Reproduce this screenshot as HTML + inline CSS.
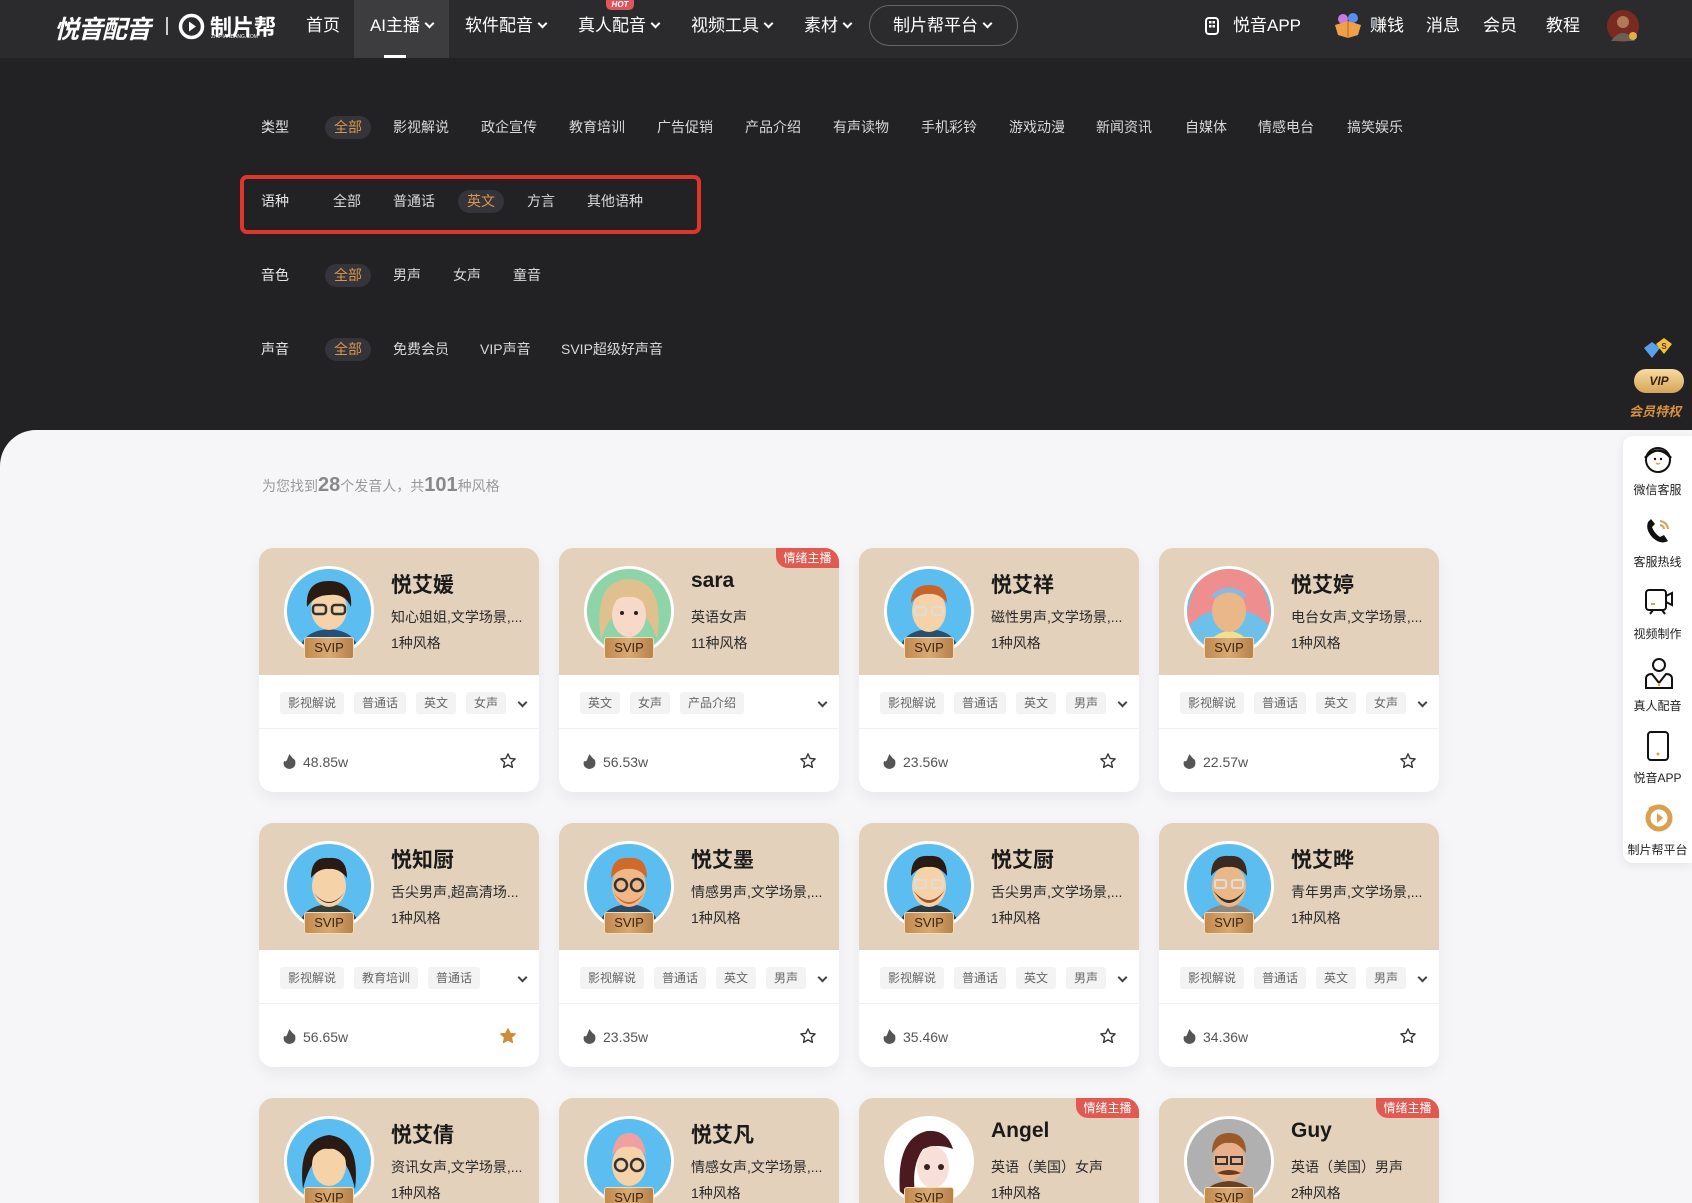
<!DOCTYPE html>
<html style="overflow:hidden;height:1203px"><head><meta charset="utf-8">
<style>
*{margin:0;padding:0;box-sizing:border-box}
body{width:1692px;height:1203px;overflow:hidden;background:#222224;font-family:"Liberation Sans","Noto Sans CJK SC",sans-serif;position:relative}
.a{position:absolute;white-space:nowrap}
.nav{position:absolute;left:0;top:0;width:1692px;height:58px;background:#2b2b2d}
.ni{position:absolute;top:0;height:58px;line-height:52px;color:#fff;font-size:17px}
.ch{display:inline-block;width:7px;height:7px;border-right:2px solid #fff;border-bottom:2px solid #fff;transform:rotate(45deg);margin-left:6px;position:relative;top:-4px}
.f{position:absolute;font-size:14px;color:#d8d8d8;line-height:23px;height:23px}
.lab{color:#e6e6e6}
.on{color:#d8964f;background:#34343a;border-radius:12px;padding:0 9px;margin-left:-9px}
.white{position:absolute;left:0;top:430px;width:1692px;height:773px;background:#f6f6f8;border-top-left-radius:36px}
.card{position:absolute;width:280px;height:244px;background:#fff;border-radius:14px;box-shadow:0 6px 16px rgba(0,0,0,.06);overflow:hidden}
.r3{height:105px;border-radius:14px 14px 0 0}
.top{position:absolute;left:0;top:0;width:280px;height:127px;background:#e4d1bc}
.av{position:absolute;left:25px;top:18px;width:90px;height:90px;border-radius:50%;border:3px solid #fff;overflow:hidden}
.sv{position:absolute;left:45px;top:89px;width:50px;height:22px;border-radius:3px;background:linear-gradient(90deg,#c28a4f,#d9aa73,#b7814a);border:1px solid #f3dcb8;color:#3b2410;font-size:13px;text-align:center;line-height:20px}
.nm{position:absolute;left:132px;top:21px;font-size:21px;font-weight:bold;color:#1a1a1a}
.ds{position:absolute;left:132px;top:59px;font-size:14px;color:#2a2a2a}
.st{position:absolute;left:132px;top:85px;font-size:14px;color:#2a2a2a}
.tags{position:absolute;left:21px;top:144px;height:22px}
.tg{display:inline-block;height:22px;line-height:22px;padding:0 8px;margin-right:10px;background:#f3f3f3;color:#666;font-size:12px;border-radius:3px}
.dd{position:absolute;left:260px;top:151px;width:7px;height:7px;border-right:2px solid #444;border-bottom:2px solid #444;transform:rotate(45deg)}
.ln{position:absolute;left:0;top:180px;width:280px;height:1px;background:#f0f0f0}
.hot{position:absolute;left:24px;top:206px;font-size:14px;color:#555}
.hot svg{vertical-align:-2px;margin-right:7px}
.star{position:absolute;left:240px;top:204px}
.emo{position:absolute;right:0;top:0;width:63px;height:20px;background:#e05a52;color:#fff;font-size:12px;line-height:20px;text-align:center;border-bottom-left-radius:12px}
.side{position:absolute;left:1623px;top:436px;width:69px;height:427px;background:#fff;border-radius:10px 0 0 10px;box-shadow:0 2px 10px rgba(0,0,0,.08)}
.si{position:absolute;left:1623px;width:69px;text-align:center;font-size:12px;color:#222}
</style></head><body>
<div class="nav"></div>
<div class="a" style="left:54px;top:10px;font-size:25px;font-weight:bold;font-style:italic;color:#fff;letter-spacing:-1px">悦音配音</div>
<div class="a" style="left:166px;top:17px;width:2px;height:18px;background:#ccc"></div>
<svg class="a" style="left:178px;top:13px" width="27" height="27" viewBox="0 0 27 27"><circle cx="13.5" cy="13.5" r="11" fill="none" stroke="#fff" stroke-width="3.5"/><path d="M11 8.5 L18 13.5 L11 18.5Z" fill="#fff"/></svg>
<div class="a" style="left:210px;top:10px;font-size:22px;font-weight:bold;color:#fff">制片帮</div>
<div class="a" style="left:211px;top:34px;font-size:5px;color:#fff">ZHIPIANBANG.COM</div>
<div class="ni" style="left:306px">首页</div>
<div class="ni" style="left:354px;width:95px;background:#3d3d40;text-align:center">AI主播<span class="ch"></span></div>
<div class="a" style="left:384px;top:55px;width:22px;height:3px;background:#fff"></div>
<div class="ni" style="left:465px">软件配音<span class="ch"></span></div>
<div class="ni" style="left:578px">真人配音<span class="ch"></span></div>
<div class="a" style="left:606px;top:0;width:28px;height:10px;background:#e0545c;border-radius:0 0 5px 5px;color:#fff;font-size:8px;font-weight:bold;font-style:italic;text-align:center;line-height:10px">HOT</div>
<div class="ni" style="left:691px">视频工具<span class="ch"></span></div>
<div class="ni" style="left:804px">素材<span class="ch"></span></div>
<div class="a" style="left:869px;top:5px;width:149px;height:41px;border:1px solid #666;border-radius:21px;color:#fff;font-size:17px;line-height:39px;padding-left:23px">制片帮平台<span class="ch"></span></div>
<svg class="a" style="left:1205px;top:17px" width="14" height="18" viewBox="0 0 14 18"><rect x="1" y="1" width="12" height="16" rx="3" fill="none" stroke="#fff" stroke-width="2"/><rect x="4" y="4" width="2.5" height="2.5" fill="#fff"/><rect x="7.5" y="4" width="2.5" height="2.5" fill="#fff"/><rect x="4" y="8" width="2.5" height="2.5" fill="#fff"/><rect x="7.5" y="8" width="2.5" height="2.5" fill="#fff"/></svg>
<div class="ni" style="left:1233px">悦音APP</div>
<svg class="a" style="left:1333px;top:11px" width="30" height="28" viewBox="0 0 30 28"><circle cx="10" cy="8" r="5" fill="#c77be0"/><circle cx="20" cy="7" r="5" fill="#5a8ef0"/><path d="M2 14 L15 10 L28 14 L25 24 L15 27 L5 24Z" fill="#f0a04a"/><path d="M15 10 L15 27" stroke="#d0782a" stroke-width="1.5"/></svg>
<div class="ni" style="left:1370px">赚钱</div>
<div class="ni" style="left:1426px">消息</div>
<div class="ni" style="left:1483px">会员</div>
<div class="ni" style="left:1546px">教程</div>
<svg class="a" style="left:1606px;top:9px" width="34" height="34" viewBox="0 0 34 34"><circle cx="17" cy="17" r="16" fill="#7a2a20"/><circle cx="17" cy="13" r="6" fill="#b07a5a"/><path d="M5 32 Q17 16 29 32Z" fill="#6b6055"/><circle cx="27" cy="27" r="4" fill="#e0b040"/></svg>

<div class="f lab" style="left:261px;top:116px">类型</div>
<div class="f on" style="left:334px;top:116px">全部</div>
<div class="f" style="left:393px;top:116px">影视解说</div>
<div class="f" style="left:481px;top:116px">政企宣传</div>
<div class="f" style="left:569px;top:116px">教育培训</div>
<div class="f" style="left:657px;top:116px">广告促销</div>
<div class="f" style="left:745px;top:116px">产品介绍</div>
<div class="f" style="left:833px;top:116px">有声读物</div>
<div class="f" style="left:921px;top:116px">手机彩铃</div>
<div class="f" style="left:1009px;top:116px">游戏动漫</div>
<div class="f" style="left:1096px;top:116px">新闻资讯</div>
<div class="f" style="left:1185px;top:116px">自媒体</div>
<div class="f" style="left:1258px;top:116px">情感电台</div>
<div class="f" style="left:1347px;top:116px">搞笑娱乐</div>

<div class="a" style="left:240px;top:175px;width:461px;height:59px;border:4px solid #e0362a;border-radius:7px"></div>
<div class="f lab" style="left:261px;top:190px">语种</div>
<div class="f" style="left:333px;top:190px">全部</div>
<div class="f" style="left:393px;top:190px">普通话</div>
<div class="f on" style="left:467px;top:190px">英文</div>
<div class="f" style="left:527px;top:190px">方言</div>
<div class="f" style="left:587px;top:190px">其他语种</div>

<div class="f lab" style="left:261px;top:264px">音色</div>
<div class="f on" style="left:334px;top:264px">全部</div>
<div class="f" style="left:393px;top:264px">男声</div>
<div class="f" style="left:453px;top:264px">女声</div>
<div class="f" style="left:513px;top:264px">童音</div>

<div class="f lab" style="left:261px;top:338px">声音</div>
<div class="f on" style="left:334px;top:338px">全部</div>
<div class="f" style="left:393px;top:338px">免费会员</div>
<div class="f" style="left:480px;top:338px">VIP声音</div>
<div class="f" style="left:561px;top:338px">SVIP超级好声音</div>

<div class="white"></div>
<div class="a" style="left:262px;top:474px;font-size:14px;color:#999">为您找到<b style="font-size:20px;color:#888">28</b>个发音人，共<b style="font-size:20px;color:#888">101</b>种风格</div>

<!-- sidebar -->
<svg class="a" style="left:1640px;top:338px" width="40" height="26" viewBox="0 0 40 26"><path d="M4 10 L12 4 L20 10 L12 20Z" fill="#5aa0e8"/><path d="M16 6 L24 0 L32 6 L24 16Z" fill="#f0c040"/><text x="24" y="11" font-size="8" font-weight="bold" text-anchor="middle" fill="#5a3a00" font-family="Liberation Sans">S</text></svg>
<div class="a" style="left:1634px;top:369px;width:50px;height:24px;border-radius:12px;background:linear-gradient(#f6dca0,#d6a55a);color:#3a2000;font-size:12px;font-weight:bold;font-style:italic;text-align:center;line-height:24px">VIP</div>
<div class="a" style="left:1629px;top:401px;font-size:13px;font-weight:bold;font-style:italic;color:#d8913f">会员特权</div>
<div class="side"></div>
<svg class="a" style="left:1642px;top:443px" width="32" height="32" viewBox="0 0 32 32"><circle cx="16" cy="17" r="12" fill="none" stroke="#111" stroke-width="2"/><path d="M3 15 Q16 0 29 15" fill="none" stroke="#111" stroke-width="2.5"/><circle cx="13" cy="16" r="1.2" fill="#111"/><circle cx="19" cy="16" r="1.2" fill="#111"/><path d="M14 20 Q16 22 18 20" stroke="#d9a050" fill="none" stroke-width="1.5"/></svg>
<div class="si" style="top:481px">微信客服</div>
<svg class="a" style="left:1643px;top:516px" width="30" height="30" viewBox="0 0 30 30"><path d="M5 6 Q2 14 10 22 Q18 29 25 25 L21 19 L17 21 Q11 17 9 11 L12 8 L8 3Z" fill="#111"/><path d="M17 5 Q24 6 25 13 M17 9 Q21 10 21 13" fill="none" stroke="#d9a050" stroke-width="2"/></svg>
<div class="si" style="top:553px">客服热线</div>
<svg class="a" style="left:1643px;top:587px" width="32" height="32" viewBox="0 0 32 32"><rect x="3" y="3" width="20" height="20" rx="3" fill="none" stroke="#111" stroke-width="2"/><path d="M23 9 L29 6 L29 18 L23 15" fill="none" stroke="#111" stroke-width="2"/><path d="M7 27 L10 23 M19 23 L22 27" stroke="#111" stroke-width="2"/><path d="M8 17 L12 17" stroke="#d9a050" stroke-width="2"/></svg>
<div class="si" style="top:625px">视频制作</div>
<svg class="a" style="left:1643px;top:657px" width="32" height="34" viewBox="0 0 32 34"><circle cx="16" cy="8" r="6" fill="none" stroke="#111" stroke-width="2"/><path d="M3 31 L3 22 Q3 17 9 17 L16 26 L23 17 Q29 17 29 22 L29 31Z" fill="none" stroke="#111" stroke-width="2"/><path d="M16 26 L16 29" stroke="#d9a050" stroke-width="2"/></svg>
<div class="si" style="top:697px">真人配音</div>
<svg class="a" style="left:1645px;top:730px" width="26" height="32" viewBox="0 0 26 32"><rect x="3" y="2" width="20" height="28" rx="3" fill="none" stroke="#111" stroke-width="2"/><circle cx="13" cy="24" r="1.5" fill="#d9a050"/></svg>
<div class="si" style="top:769px">悦音APP</div>
<svg class="a" style="left:1644px;top:802px" width="30" height="30" viewBox="0 0 30 30"><circle cx="15" cy="16" r="11" fill="none" stroke="#d9a050" stroke-width="5"/><path d="M13 11 L19 16 L13 21Z" fill="#d9a050"/><path d="M4 6 L10 3 L8 9Z" fill="#d9a050"/></svg>
<div class="si" style="top:841px">制片帮平台</div>

<!-- cards row 1 -->
<div class="card" style="left:259px;top:548px"><div class="top"></div>
<div class="av"><svg width="84" height="84" viewBox="0 0 84 84"><rect width="84" height="84" fill="#5bbdf0"/><path d="M12 84 Q14 62 42 60 Q70 62 72 84Z" fill="#234f78"/><ellipse cx="42" cy="40" rx="18" ry="21" fill="#f6d2a8"/><path d="M20 38 Q18 12 42 12 Q66 12 64 38 Q58 24 42 26 Q28 26 20 38Z" fill="#2a1a14"/><rect x="26" y="36" width="13" height="9" rx="3" fill="none" stroke="#333" stroke-width="2.5"/><rect x="45" y="36" width="13" height="9" rx="3" fill="none" stroke="#333" stroke-width="2.5"/></svg></div>
<div class="sv">SVIP</div><div class="nm">悦艾媛</div><div class="ds">知心姐姐,文学场景,...</div><div class="st">1种风格</div>
<div class="tags"><span class="tg">影视解说</span><span class="tg">普通话</span><span class="tg">英文</span><span class="tg">女声</span></div><div class="dd"></div><div class="ln"></div>
<div class="hot"><svg width="13" height="15" viewBox="0 0 13 15"><path d="M6.5 0 Q9 4 12 6 Q14 14 6.5 15 Q-1 14 1 7 Q3 8 4 6 Q5 3 6.5 0Z" fill="#555"/></svg>48.85w</div>
<svg class="star" width="18" height="18" viewBox="0 0 24 24"><path d="M12 2.5 L14.8 8.6 L21.5 9.3 L16.5 13.8 L17.9 20.5 L12 17.1 L6.1 20.5 L7.5 13.8 L2.5 9.3 L9.2 8.6Z" fill="none" stroke="#333" stroke-width="1.8" stroke-linejoin="round"/></svg></div>

<div class="card" style="left:559px;top:548px"><div class="top"></div>
<div class="av"><svg width="84" height="84" viewBox="0 0 84 84"><rect width="84" height="84" fill="#8fd4a8"/><path d="M14 70 Q8 30 24 16 Q42 4 60 16 Q76 30 70 70 Q60 40 42 40 Q24 40 14 70Z" fill="#e0c08e"/><ellipse cx="42" cy="46" rx="17" ry="22" fill="#f8d8c8"/><path d="M22 40 Q26 18 42 18 Q58 18 62 40 Q52 26 42 28 Q30 26 22 40Z" fill="#e0c08e"/><circle cx="35" cy="44" r="2" fill="#222"/><circle cx="49" cy="44" r="2" fill="#222"/></svg></div>
<div class="sv">SVIP</div><div class="nm">sara</div><div class="ds">英语女声</div><div class="st">11种风格</div><div class="emo">情绪主播</div>
<div class="tags"><span class="tg">英文</span><span class="tg">女声</span><span class="tg">产品介绍</span></div><div class="dd"></div><div class="ln"></div>
<div class="hot"><svg width="13" height="15" viewBox="0 0 13 15"><path d="M6.5 0 Q9 4 12 6 Q14 14 6.5 15 Q-1 14 1 7 Q3 8 4 6 Q5 3 6.5 0Z" fill="#555"/></svg>56.53w</div>
<svg class="star" width="18" height="18" viewBox="0 0 24 24"><path d="M12 2.5 L14.8 8.6 L21.5 9.3 L16.5 13.8 L17.9 20.5 L12 17.1 L6.1 20.5 L7.5 13.8 L2.5 9.3 L9.2 8.6Z" fill="none" stroke="#333" stroke-width="1.8" stroke-linejoin="round"/></svg></div>

<div class="card" style="left:859px;top:548px"><div class="top"></div>
<div class="av"><svg width="84" height="84" viewBox="0 0 84 84"><rect width="84" height="84" fill="#5bbdf0"/><path d="M12 84 Q14 62 42 60 Q70 62 72 84Z" fill="#2a5070"/><ellipse cx="42" cy="42" rx="17" ry="21" fill="#f6d2a8"/><path d="M24 34 Q24 16 42 16 Q60 16 60 34 Q52 24 42 25 Q32 24 24 34Z" fill="#c8642a"/><rect x="28" y="38" width="11" height="8" rx="2" fill="none" stroke="#ddd" stroke-width="2"/><rect x="45" y="38" width="11" height="8" rx="2" fill="none" stroke="#ddd" stroke-width="2"/></svg></div>
<div class="sv">SVIP</div><div class="nm">悦艾祥</div><div class="ds">磁性男声,文学场景,...</div><div class="st">1种风格</div>
<div class="tags"><span class="tg">影视解说</span><span class="tg">普通话</span><span class="tg">英文</span><span class="tg">男声</span></div><div class="dd"></div><div class="ln"></div>
<div class="hot"><svg width="13" height="15" viewBox="0 0 13 15"><path d="M6.5 0 Q9 4 12 6 Q14 14 6.5 15 Q-1 14 1 7 Q3 8 4 6 Q5 3 6.5 0Z" fill="#555"/></svg>23.56w</div>
<svg class="star" width="18" height="18" viewBox="0 0 24 24"><path d="M12 2.5 L14.8 8.6 L21.5 9.3 L16.5 13.8 L17.9 20.5 L12 17.1 L6.1 20.5 L7.5 13.8 L2.5 9.3 L9.2 8.6Z" fill="none" stroke="#333" stroke-width="1.8" stroke-linejoin="round"/></svg></div>

<div class="card" style="left:1159px;top:548px"><div class="top"></div>
<div class="av"><svg width="84" height="84" viewBox="0 0 84 84"><rect width="84" height="84" fill="#6cc0ea"/><path d="M0 60 Q0 0 42 0 Q84 0 84 60 Q70 40 42 40 Q14 40 0 60Z" fill="#ee8e8e"/><path d="M20 84 Q22 64 42 62 Q62 64 64 84Z" fill="#f4e08a"/><ellipse cx="42" cy="42" rx="17" ry="21" fill="#eab888"/><path d="M26 28 Q42 14 58 28" fill="none" stroke="#8cb8e0" stroke-width="5"/></svg></div>
<div class="sv">SVIP</div><div class="nm">悦艾婷</div><div class="ds">电台女声,文学场景,...</div><div class="st">1种风格</div>
<div class="tags"><span class="tg">影视解说</span><span class="tg">普通话</span><span class="tg">英文</span><span class="tg">女声</span></div><div class="dd"></div><div class="ln"></div>
<div class="hot"><svg width="13" height="15" viewBox="0 0 13 15"><path d="M6.5 0 Q9 4 12 6 Q14 14 6.5 15 Q-1 14 1 7 Q3 8 4 6 Q5 3 6.5 0Z" fill="#555"/></svg>22.57w</div>
<svg class="star" width="18" height="18" viewBox="0 0 24 24"><path d="M12 2.5 L14.8 8.6 L21.5 9.3 L16.5 13.8 L17.9 20.5 L12 17.1 L6.1 20.5 L7.5 13.8 L2.5 9.3 L9.2 8.6Z" fill="none" stroke="#333" stroke-width="1.8" stroke-linejoin="round"/></svg></div>

<!-- row 2 -->
<div class="card" style="left:259px;top:823px"><div class="top"></div>
<div class="av"><svg width="84" height="84" viewBox="0 0 84 84"><rect width="84" height="84" fill="#5bbdf0"/><path d="M12 84 Q14 62 42 60 Q70 62 72 84Z" fill="#30403c"/><ellipse cx="42" cy="42" rx="17" ry="21" fill="#f6d2a8"/><path d="M24 34 Q24 12 42 14 Q60 12 60 34 Q52 24 42 25 Q32 24 24 34Z" fill="#2a1a14"/><path d="M26 48 Q42 70 58 48 Q50 58 42 58 Q34 58 26 48Z" fill="#3a2a20"/></svg></div>
<div class="sv">SVIP</div><div class="nm">悦知厨</div><div class="ds">舌尖男声,超高清场...</div><div class="st">1种风格</div>
<div class="tags"><span class="tg">影视解说</span><span class="tg">教育培训</span><span class="tg">普通话</span></div><div class="dd"></div><div class="ln"></div>
<div class="hot"><svg width="13" height="15" viewBox="0 0 13 15"><path d="M6.5 0 Q9 4 12 6 Q14 14 6.5 15 Q-1 14 1 7 Q3 8 4 6 Q5 3 6.5 0Z" fill="#555"/></svg>56.65w</div>
<svg class="star" width="18" height="18" viewBox="0 0 24 24"><path d="M12 2.5 L14.8 8.6 L21.5 9.3 L16.5 13.8 L17.9 20.5 L12 17.1 L6.1 20.5 L7.5 13.8 L2.5 9.3 L9.2 8.6Z" fill="#d08a3a" stroke="#d08a3a" stroke-width="1.8" stroke-linejoin="round"/></svg></div>

<div class="card" style="left:559px;top:823px"><div class="top"></div>
<div class="av"><svg width="84" height="84" viewBox="0 0 84 84"><rect width="84" height="84" fill="#5bbdf0"/><path d="M12 84 Q14 62 42 60 Q70 62 72 84Z" fill="#2a4a6a"/><ellipse cx="42" cy="42" rx="17" ry="21" fill="#f0b888"/><path d="M24 34 Q24 12 42 14 Q60 12 60 34 Q52 24 42 25 Q32 24 24 34Z" fill="#d06a2a"/><path d="M26 48 Q42 72 58 48 Q50 58 42 58 Q34 58 26 48Z" fill="#d06a2a"/><circle cx="34" cy="41" r="6" fill="none" stroke="#333" stroke-width="2.5"/><circle cx="50" cy="41" r="6" fill="none" stroke="#333" stroke-width="2.5"/></svg></div>
<div class="sv">SVIP</div><div class="nm">悦艾墨</div><div class="ds">情感男声,文学场景,...</div><div class="st">1种风格</div>
<div class="tags"><span class="tg">影视解说</span><span class="tg">普通话</span><span class="tg">英文</span><span class="tg">男声</span></div><div class="dd"></div><div class="ln"></div>
<div class="hot"><svg width="13" height="15" viewBox="0 0 13 15"><path d="M6.5 0 Q9 4 12 6 Q14 14 6.5 15 Q-1 14 1 7 Q3 8 4 6 Q5 3 6.5 0Z" fill="#555"/></svg>23.35w</div>
<svg class="star" width="18" height="18" viewBox="0 0 24 24"><path d="M12 2.5 L14.8 8.6 L21.5 9.3 L16.5 13.8 L17.9 20.5 L12 17.1 L6.1 20.5 L7.5 13.8 L2.5 9.3 L9.2 8.6Z" fill="none" stroke="#333" stroke-width="1.8" stroke-linejoin="round"/></svg></div>

<div class="card" style="left:859px;top:823px"><div class="top"></div>
<div class="av"><svg width="84" height="84" viewBox="0 0 84 84"><rect width="84" height="84" fill="#5bbdf0"/><path d="M12 84 Q14 62 42 60 Q70 62 72 84Z" fill="#2a3a44"/><ellipse cx="42" cy="42" rx="17" ry="21" fill="#f6d2a8"/><path d="M24 32 Q24 10 42 12 Q60 10 60 32 Q52 22 42 23 Q32 22 24 32Z" fill="#2a1a14"/><path d="M26 46 Q42 72 58 46 Q50 56 42 56 Q34 56 26 46Z" fill="#a0522a"/><rect x="28" y="36" width="11" height="8" rx="2" fill="none" stroke="#ddd" stroke-width="2"/><rect x="45" y="36" width="11" height="8" rx="2" fill="none" stroke="#ddd" stroke-width="2"/></svg></div>
<div class="sv">SVIP</div><div class="nm">悦艾厨</div><div class="ds">舌尖男声,文学场景,...</div><div class="st">1种风格</div>
<div class="tags"><span class="tg">影视解说</span><span class="tg">普通话</span><span class="tg">英文</span><span class="tg">男声</span></div><div class="dd"></div><div class="ln"></div>
<div class="hot"><svg width="13" height="15" viewBox="0 0 13 15"><path d="M6.5 0 Q9 4 12 6 Q14 14 6.5 15 Q-1 14 1 7 Q3 8 4 6 Q5 3 6.5 0Z" fill="#555"/></svg>35.46w</div>
<svg class="star" width="18" height="18" viewBox="0 0 24 24"><path d="M12 2.5 L14.8 8.6 L21.5 9.3 L16.5 13.8 L17.9 20.5 L12 17.1 L6.1 20.5 L7.5 13.8 L2.5 9.3 L9.2 8.6Z" fill="none" stroke="#333" stroke-width="1.8" stroke-linejoin="round"/></svg></div>

<div class="card" style="left:1159px;top:823px"><div class="top"></div>
<div class="av"><svg width="84" height="84" viewBox="0 0 84 84"><rect width="84" height="84" fill="#5bbdf0"/><path d="M12 84 Q14 62 42 60 Q70 62 72 84Z" fill="#888"/><ellipse cx="42" cy="42" rx="17" ry="21" fill="#e8b888"/><path d="M24 32 Q24 10 42 12 Q60 10 60 32 Q52 22 42 23 Q32 22 24 32Z" fill="#3a2a20"/><path d="M26 46 Q42 72 58 46 Q50 56 42 56 Q34 56 26 46Z" fill="#3a2a20"/><rect x="28" y="36" width="11" height="8" rx="2" fill="none" stroke="#ddd" stroke-width="2"/><rect x="45" y="36" width="11" height="8" rx="2" fill="none" stroke="#ddd" stroke-width="2"/></svg></div>
<div class="sv">SVIP</div><div class="nm">悦艾晔</div><div class="ds">青年男声,文学场景,...</div><div class="st">1种风格</div>
<div class="tags"><span class="tg">影视解说</span><span class="tg">普通话</span><span class="tg">英文</span><span class="tg">男声</span></div><div class="dd"></div><div class="ln"></div>
<div class="hot"><svg width="13" height="15" viewBox="0 0 13 15"><path d="M6.5 0 Q9 4 12 6 Q14 14 6.5 15 Q-1 14 1 7 Q3 8 4 6 Q5 3 6.5 0Z" fill="#555"/></svg>34.36w</div>
<svg class="star" width="18" height="18" viewBox="0 0 24 24"><path d="M12 2.5 L14.8 8.6 L21.5 9.3 L16.5 13.8 L17.9 20.5 L12 17.1 L6.1 20.5 L7.5 13.8 L2.5 9.3 L9.2 8.6Z" fill="none" stroke="#333" stroke-width="1.8" stroke-linejoin="round"/></svg></div>

<!-- row 3 -->
<div class="card r3" style="left:259px;top:1098px"><div class="top"></div>
<div class="av"><svg width="84" height="84" viewBox="0 0 84 84"><rect width="84" height="84" fill="#5bbdf0"/><path d="M16 70 Q10 20 42 16 Q74 20 68 70 Q60 36 42 34 Q24 36 16 70Z" fill="#2a1a14"/><ellipse cx="42" cy="46" rx="17" ry="21" fill="#f6d2a8"/><path d="M25 40 Q30 22 42 22 Q54 22 59 40 Q50 28 42 30 Q32 28 25 40Z" fill="#2a1a14"/></svg></div>
<div class="sv">SVIP</div><div class="nm">悦艾倩</div><div class="ds">资讯女声,文学场景,...</div><div class="st">1种风格</div></div>

<div class="card r3" style="left:559px;top:1098px"><div class="top"></div>
<div class="av"><svg width="84" height="84" viewBox="0 0 84 84"><rect width="84" height="84" fill="#5bbdf0"/><ellipse cx="42" cy="46" rx="17" ry="21" fill="#f6d2a8"/><path d="M25 36 Q28 14 42 14 Q56 14 59 36 Q50 26 42 28 Q34 26 25 36Z" fill="#f0a0a0"/><circle cx="34" cy="46" r="6" fill="none" stroke="#333" stroke-width="2.5"/><circle cx="50" cy="46" r="6" fill="none" stroke="#333" stroke-width="2.5"/></svg></div>
<div class="sv">SVIP</div><div class="nm">悦艾凡</div><div class="ds">情感女声,文学场景,...</div><div class="st">1种风格</div></div>

<div class="card r3" style="left:859px;top:1098px"><div class="top"></div>
<div class="av"><svg width="84" height="84" viewBox="0 0 84 84"><rect width="84" height="84" fill="#fff"/><path d="M14 84 Q6 20 40 12 Q60 10 66 30 Q50 24 36 30 Q22 50 30 84Z" fill="#4a1a20"/><ellipse cx="46" cy="48" rx="16" ry="21" fill="#f8e0d8"/><circle cx="40" cy="48" r="3" fill="#3a2020"/><circle cx="54" cy="48" r="3" fill="#3a2020"/></svg></div>
<div class="sv">SVIP</div><div class="nm">Angel</div><div class="ds">英语（美国）女声</div><div class="st">1种风格</div><div class="emo">情绪主播</div></div>

<div class="card r3" style="left:1159px;top:1098px"><div class="top"></div>
<div class="av"><svg width="84" height="84" viewBox="0 0 84 84"><rect width="84" height="84" fill="#b0b0b0"/><path d="M14 84 Q16 64 42 62 Q68 64 70 84Z" fill="#6a4020"/><ellipse cx="42" cy="42" rx="16" ry="20" fill="#e8b088"/><path d="M25 34 Q25 14 42 14 Q59 14 59 34 Q50 22 42 24 Q34 22 25 34Z" fill="#9a5a2a"/><path d="M30 54 Q42 48 54 54 Q42 58 30 54Z" fill="#6a3a1a"/><rect x="29" y="38" width="11" height="7" fill="none" stroke="#333" stroke-width="2"/><rect x="44" y="38" width="11" height="7" fill="none" stroke="#333" stroke-width="2"/></svg></div>
<div class="sv">SVIP</div><div class="nm">Guy</div><div class="ds">英语（美国）男声</div><div class="st">2种风格</div><div class="emo">情绪主播</div></div>
</body></html>
